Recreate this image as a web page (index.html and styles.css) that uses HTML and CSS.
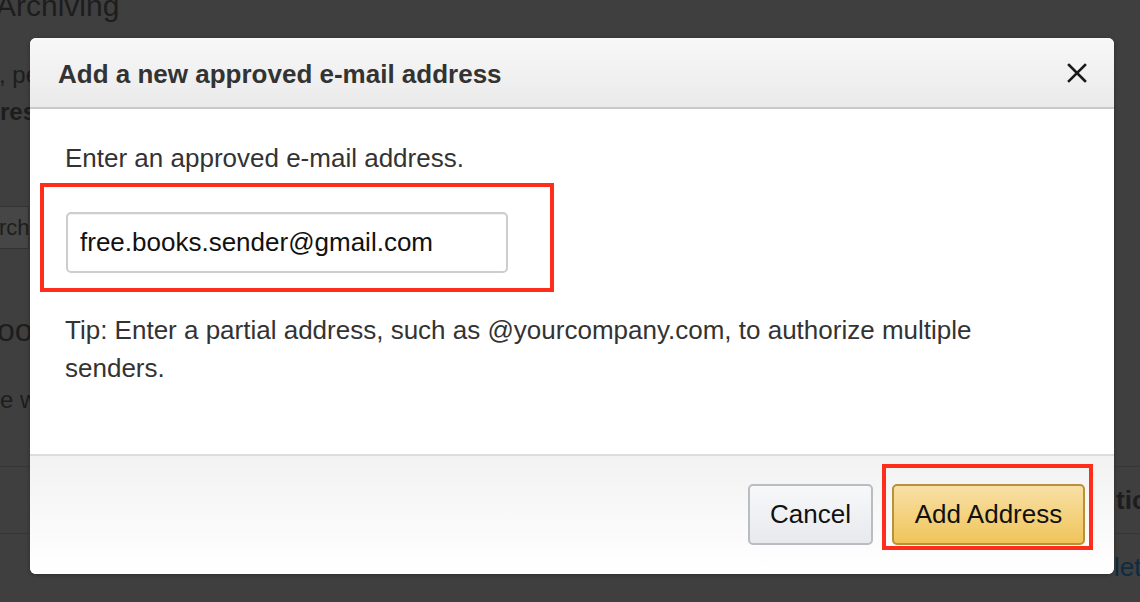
FILE: index.html
```html
<!DOCTYPE html>
<html>
<head>
<meta charset="utf-8">
<link rel="stylesheet" href="styles.css">
</head>
<body>
<div class="page">
  <h1 class="page-title">Archiving</h1>
  <div class="page-main">
    <div class="side left-col">
      <p class="bg-line bg-first">, pe</p>
      <p class="bg-line bg-bold">res</p>
      <div class="search-box"><span class="search-text">rch</span></div>
      <p class="bg-sub">oo</p>
      <p class="bg-line2">e w</p>
      <div class="bg-row bg-row-first"></div>
      <div class="bg-row"></div>
    </div>
    <div class="center-col"></div>
    <div class="side right-col">
      <div class="bg-row bg-row-first"><span class="bg-head">tic</span></div>
      <div class="bg-row"><span class="bg-link">let</span></div>
    </div>
  </div>
</div>

<div class="modal">
  <div class="modal-header">
    <h3 class="modal-title">Add a new approved e-mail address</h3>
    <svg class="close-icon" width="22" height="22" viewBox="0 0 22 22">
      <path d="M3 3 L19 19 M19 3 L3 19" stroke="#1a1a1a" stroke-width="2.6" stroke-linecap="square" fill="none"/>
    </svg>
  </div>
  <div class="modal-body">
    <p class="label">Enter an approved e-mail address.</p>
    <input class="email-input" type="text" value="free.books.sender@gmail.com">
    <p class="tip">Tip: Enter a partial address, such as @yourcompany.com, to authorize multiple senders.</p>
  </div>
  <div class="modal-footer">
    <button class="btn btn-cancel">Cancel</button>
    <button class="btn btn-primary">Add Address</button>
  </div>
  <div class="mark mark-input"></div>
  <div class="mark mark-button"></div>
</div>
</body>
</html>
```

FILE: styles.css
```css
html, body {
  margin: 0;
  padding: 0;
  width: 1140px;
  height: 602px;
  overflow: hidden;
  background: #3f3f3f;
  font-family: "Liberation Sans", Arial, Helvetica, sans-serif;
}

.page {
  color: #1d1d1d;
}

.page-title {
  margin: -9px 0 0 -4px;
  height: 49px;
  font-size: 30px;
  font-weight: normal;
  line-height: 30px;
  white-space: nowrap;
}

.page-main {
  display: grid;
  grid-template-columns: 30px 1084px 26px;
}

.side {
  overflow: hidden;
  display: flex;
  flex-direction: column;
  white-space: nowrap;
}

.bg-line {
  margin: 0;
  font-size: 24px;
  line-height: 36px;
}
.bg-first {
  margin: 17px 0 0 -1px;
}
.bg-bold {
  margin: 1px 0 0 0;
  font-weight: bold;
}

.search-box {
  margin-top: 76px;
  height: 43px;
  box-sizing: border-box;
  width: 29px;
  border-top: 1px solid #333;
  border-bottom: 1px solid #333;
  border-right: 1px solid #333;
  background: #464646;
  display: flex;
  align-items: center;
  overflow: hidden;
}
.search-text {
  font-size: 22px;
  margin-left: -1px;
}

.bg-sub {
  margin: 61px 0 0 -3px;
  font-size: 32px;
  line-height: 40px;
}

.bg-line2 {
  margin: 35px 0 0 0;
  font-size: 24px;
  line-height: 30px;
}

.bg-row {
  height: 67px;
  box-sizing: border-box;
  border-top: 1px solid #363636;
  display: flex;
  align-items: center;
  flex: none;
}
.left-col .bg-row-first {
  margin-top: 51px;
}
.right-col .bg-row-first {
  margin-top: 426px;
}
.bg-head {
  font-size: 26px;
  font-weight: bold;
  margin-left: 2px;
}
.bg-link {
  font-size: 26px;
  color: #0d2b42;
  margin-left: 0;
}

/* Modal */
.modal {
  position: absolute;
  left: 30px;
  top: 38px;
  width: 1084px;
  height: 536px;
  background: #fff;
  border-radius: 6px;
  display: flex;
  flex-direction: column;
  overflow: hidden;
  box-shadow: 0 1px 4px rgba(0,0,0,0.3);
}

.modal-header {
  height: 69px;
  flex: none;
  background: linear-gradient(#f8f8f8, #eaeaea);
  border-bottom: 2px solid #c9c9c9;
  display: flex;
  align-items: center;
  justify-content: space-between;
  padding: 0 26px 0 28px;
}
.modal-title {
  margin: 0;
  font-size: 26px;
  font-weight: bold;
  color: #333;
  line-height: 30px;
  padding-top: 2px;
}
.close-icon {
  display: block;
  margin-top: 1px;
}

.modal-body {
  flex: 1;
  padding: 30px 60px 0 35px;
}
.label {
  margin: 0;
  font-size: 26px;
  line-height: 38px;
  color: #333;
}
.email-input {
  display: block;
  box-sizing: border-box;
  margin: 35px 0 0 1px;
  width: 442px;
  height: 61px;
  border: 2px solid #cdcdcd;
  border-radius: 5px;
  padding: 0 12px;
  font-family: "Liberation Sans", Arial, Helvetica, sans-serif;
  font-size: 26px;
  color: #111;
  outline: none;
  box-shadow: inset 0 1px 1px rgba(0,0,0,0.05);
}
.tip {
  margin: 38px 0 0 0;
  font-size: 26px;
  line-height: 38px;
  color: #333;
}

.modal-footer {
  flex: none;
  height: 120px;
  box-sizing: border-box;
  border-top: 2px solid #dcdcdc;
  background: linear-gradient(#f2f2f2, #ffffff);
  display: flex;
  justify-content: flex-end;
  align-items: flex-start;
  gap: 19px;
  padding: 28px 29px 0 0;
}
.btn {
  height: 61px;
  box-sizing: border-box;
  border-radius: 5px;
  font-family: "Liberation Sans", Arial, Helvetica, sans-serif;
  font-size: 26px;
  color: #111;
  padding: 0;
  cursor: pointer;
}
.btn-cancel {
  width: 125px;
  border: 2px solid #b9bcc1;
  background: linear-gradient(#f7f8fa, #e7e9ec);
}
.btn-primary {
  width: 193px;
  border: 2px solid #b89238;
  background: linear-gradient(#f8e0a6, #f0c45a);
}

/* Annotation overlays */
.mark {
  position: absolute;
  border: 4px solid #ff2d1c;
  box-sizing: border-box;
  pointer-events: none;
}
.mark-input {
  left: 10px;
  top: 145px;
  width: 514px;
  height: 109px;
}
.mark-button {
  left: 852px;
  top: 426px;
  width: 211px;
  height: 86px;
}
```
